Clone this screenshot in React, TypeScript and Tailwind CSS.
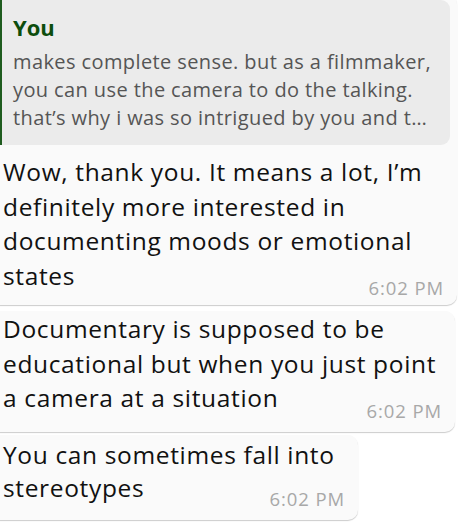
import React from 'react';

const font = { fontFamily: '"Open Sans", "Liberation Sans", sans-serif' };

const Time = () => (
    <div className="flex justify-end -mt-[15px] text-[18.5px] leading-[20px] tracking-[0.9px] text-[#a8a8a8]">6:02 PM</div>
);

export default function App() {
    return (
        <div className="w-[472px] h-[526px] bg-white overflow-hidden" style={font}>
            <div className="flex flex-col gap-[6px] -mt-[6px]">
                {/* reply with quoted message */}
                <div className="-ml-[10px] w-[467px] rounded-[10px] bg-[#fafafa] pt-[6px] pr-[7px] pl-[10px] pb-[7px] shadow-[0_1px_1px_rgba(0,0,0,0.2)]">
                    <div className="rounded-[9px] rounded-l-none bg-[#ebebeb] border-l-2 border-[#1f5c1f] pl-[11px] pr-2 pt-[14px] pb-[13px]">
                        <div className="text-[22px] leading-[27px] font-bold text-[#0d4d0d]">You</div>
                        <div className="mt-[7px] text-[20px] leading-[28px] tracking-[0.4px] text-[#555555]">
                            <div className="whitespace-nowrap">makes complete sense. but as a filmmaker,</div>
                            <div className="whitespace-nowrap">you can use the camera to do the talking.</div>
                            <div className="whitespace-nowrap">that’s why i was so intrigued by you and t…</div>
                        </div>
                    </div>
                    <div className="pl-[3px] pr-[6px]">
                        <div className="pt-[10px] text-[24.5px] leading-[34.5px] tracking-[0.65px] text-[#111111]">
                            Wow, thank you. It means a lot, I’m<br />
                            definitely more interested in<br />
                            documenting moods or emotional<br />
                            states
                        </div>
                        <Time />
                    </div>
                </div>
                <div className="-ml-[10px] w-[465px] rounded-[10px] bg-[#fafafa] pl-[13px] pr-[13px] pt-[1px] pb-[11px] shadow-[0_1px_1px_rgba(0,0,0,0.2)]">
                    <div className="text-[24.5px] leading-[34.5px] tracking-[0.65px] text-[#111111]">
                        Documentary is supposed to be<br />
                        educational but when you just point<br />
                        a camera at a situation
                    </div>
                    <Time />
                </div>
                <div className="-ml-[10px] mt-[-3px] w-[368px] rounded-[10px] bg-[#fafafa] pl-[13px] pr-[13px] pt-[3px] pb-[11px] shadow-[0_1px_1px_rgba(0,0,0,0.2)]">
                    <div className="text-[24.5px] leading-[33px] tracking-[0.65px] text-[#111111]">
                        You can sometimes fall into<br />
                        stereotypes
                    </div>
                    <Time />
                </div>
            </div>
        </div>
    );
}
